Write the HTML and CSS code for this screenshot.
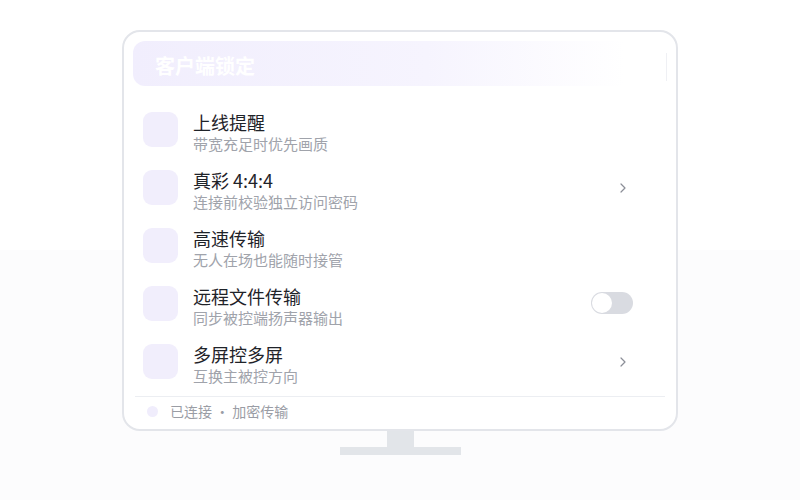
FILE: index.html
```html
<!DOCTYPE html>
<html lang="zh-CN">
<head>
  <meta charset="UTF-8">
  <meta name="viewport" content="width=device-width, initial-scale=1.0">
  <title>客户端锁定</title>
  <link rel="stylesheet" href="styles.css">
</head>
<body>
  <div class="stage">
    <div class="monitor">
      <div class="header">
        <span class="title">客户端锁定</span>
        <span class="tools"></span>
      </div>

      <ul class="list">
        <li class="row">
          <span class="icon"></span>
          <div class="text">
            <div class="name">上线提醒</div>
            <div class="desc">带宽充足时优先画质</div>
          </div>
        </li>
        <li class="row">
          <span class="icon"></span>
          <div class="text">
            <div class="name">真彩 4:4:4</div>
            <div class="desc">连接前校验独立访问密码</div>
          </div>
          <svg class="chevron" width="6" height="10" viewBox="0 0 6 10"><path d="M1 1l4 4-4 4" fill="none" stroke="#8b8e97" stroke-width="1.2" stroke-linecap="round" stroke-linejoin="round"/></svg>
        </li>
        <li class="row">
          <span class="icon"></span>
          <div class="text">
            <div class="name">高速传输</div>
            <div class="desc">无人在场也能随时接管</div>
          </div>
        </li>
        <li class="row">
          <span class="icon"></span>
          <div class="text">
            <div class="name">远程文件传输</div>
            <div class="desc">同步被控端扬声器输出</div>
          </div>
          <span class="toggle"><span class="knob"></span></span>
        </li>
        <li class="row">
          <span class="icon"></span>
          <div class="text">
            <div class="name">多屏控多屏</div>
            <div class="desc">互换主被控方向</div>
          </div>
          <svg class="chevron" width="6" height="10" viewBox="0 0 6 10"><path d="M1 1l4 4-4 4" fill="none" stroke="#8b8e97" stroke-width="1.2" stroke-linecap="round" stroke-linejoin="round"/></svg>
        </li>
      </ul>

      <div class="footer">
        <span class="dot"></span>
        <span>已连接 · 加密传输</span>
      </div>
    </div>
    <div class="neck"></div>
    <div class="base"></div>
  </div>
</body>
</html>
```

FILE: styles.css
```css
html, body {
  margin: 0;
  height: 100%;
}
body {
  font-family: "Noto Sans CJK SC", "Noto Sans", sans-serif;
  background: linear-gradient(to bottom, #ffffff 0, #ffffff 50%, #fcfcfd 50%, #fcfcfd 100%);
  color: #1f2329;
}
.stage {
  display: flex;
  flex-direction: column;
  align-items: center;
  padding-top: 30px;
}
.monitor {
  width: 534px;
  height: 379px;
  border: 2px solid #e3e5ea;
  border-radius: 18px;
  background: #fff;
  padding: 9px;
  display: flex;
  flex-direction: column;
}
.header {
  height: 45px;
  border-radius: 12px;
  background: linear-gradient(90deg, #f1eefd 0%, #f6f4fe 55%, #ffffff 92%);
  display: flex;
  align-items: center;
  justify-content: space-between;
  padding: 0 0 0 22px;
  flex-shrink: 0;
}
.title {
  color: #fff;
  font-size: 20px;
  font-weight: 700;
  line-height: 24px;
  padding-top: 4px;
}
.tools {
  width: 1px;
  height: 28px;
  background: #eff0f4;
  margin-top: 6px;
}
.list {
  list-style: none;
  margin: 26px 0 0;
  padding: 0 34px 0 10px;
  display: flex;
  flex-direction: column;
  gap: 12px;
}
.row {
  display: flex;
  align-items: flex-start;
  height: 46px;
}
.icon {
  width: 35px;
  height: 35px;
  border-radius: 9px;
  background: #f1eefc;
  flex-shrink: 0;
}
.text {
  flex: 1;
  margin-left: 15px;
  margin-top: -1px;
}
.name {
  font-size: 18px;
  line-height: 22px;
  color: #1f2329;
}
.desc {
  font-size: 15px;
  line-height: 20px;
  margin-top: 1px;
  color: #a0a3ab;
}
.chevron {
  margin: 13px 7px 0 0;
}
.toggle {
  width: 42px;
  height: 22px;
  border-radius: 11px;
  background: #d9dbe1;
  margin-top: 6px;
  padding: 1px;
  box-sizing: border-box;
  display: flex;
}
.knob {
  width: 20px;
  height: 20px;
  border-radius: 50%;
  background: #fff;
}
.footer {
  margin: 6px 2px 0;
  border-top: 1px solid #eceef2;
  flex: 1;
  display: flex;
  align-items: center;
  padding: 4px 0 0 12px;
  font-size: 14px;
  color: #9a9da5;
}
.dot {
  width: 11px;
  height: 11px;
  border-radius: 50%;
  background: #f0edfc;
  margin-right: 12px;
}
.neck {
  width: 27px;
  height: 16px;
  background: #e2e5e9;
}
.base {
  width: 121px;
  height: 8px;
  background: #e2e5e9;
}
```
